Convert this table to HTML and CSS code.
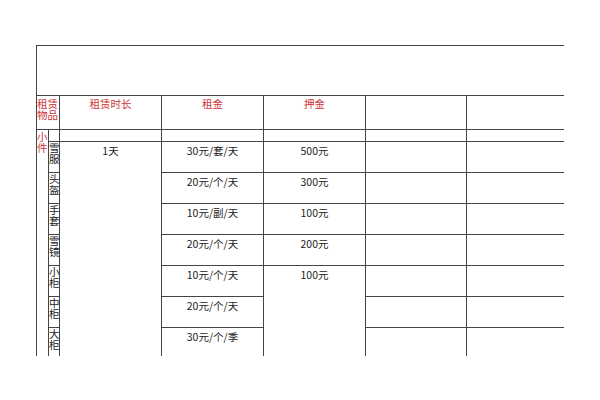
FILE: index.html
```html
<!DOCTYPE html>
<html lang="zh-CN">
<head>
<meta charset="utf-8">
<title>租赁价格表</title>
<link rel="stylesheet" href="styles.css">
</head>
<body>
<div class="sheet">
  <div class="c top"></div>

  <div class="c hd span2 narrow">租赁物品</div>
  <div class="c hd">租赁时长</div>
  <div class="c hd">租金</div>
  <div class="c hd">押金</div>
  <div class="c"></div>
  <div class="c"></div>

  <div class="c cat small">小件</div>
  <div class="c"></div>
  <div class="c"></div>
  <div class="c"></div>
  <div class="c"></div>
  <div class="c"></div>
  <div class="c"></div>

  <div class="c item">雪服</div>
  <div class="c v dur">1天</div>
  <div class="c v">30元/套/天</div>
  <div class="c v">500元</div>
  <div class="c"></div>
  <div class="c"></div>

  <div class="c item">头盔</div>
  <div class="c v">20元/个/天</div>
  <div class="c v">300元</div>
  <div class="c"></div>
  <div class="c"></div>

  <div class="c item">手套</div>
  <div class="c v">10元/副/天</div>
  <div class="c v">100元</div>
  <div class="c"></div>
  <div class="c"></div>

  <div class="c item">雪镜</div>
  <div class="c v">20元/个/天</div>
  <div class="c v">200元</div>
  <div class="c"></div>
  <div class="c"></div>

  <div class="c item">小柜</div>
  <div class="c v">10元/个/天</div>
  <div class="c v dep3">100元</div>
  <div class="c"></div>
  <div class="c"></div>

  <div class="c item">中柜</div>
  <div class="c v">20元/个/天</div>
  <div class="c"></div>
  <div class="c"></div>

  <div class="c item">大柜</div>
  <div class="c v">30元/个/季</div>
  <div class="c"></div>
  <div class="c"></div>
</div>
</body>
</html>
```

FILE: styles.css
```css
html, body {
  margin: 0;
  padding: 0;
  background: #ffffff;
}

body {
  padding: 45px 0 0 36px;
  font-family: "Noto Sans CJK SC", "Noto Sans", sans-serif;
  font-size: 10.5px;
  color: #222222;
}

.sheet {
  display: grid;
  grid-template-columns: 12px 11px 102px 102px 102px 101px 98px;
  grid-template-rows: 50px 34px 12px 31px 31px 31px 31px 31px 31px 29px;
}

.c {
  box-sizing: border-box;
  border-top: 1px solid #444444;
  border-left: 1px solid #444444;
  min-width: 0;
  line-height: 12px;
}

.top {
  grid-column: span 7;
}

.span2 {
  grid-column: span 2;
}

.hd {
  color: #cc3535;
  text-align: center;
  padding-top: 2px;
}

.narrow {
  text-align: left;
  line-height: 11px;
  padding-top: 2px;
  word-break: break-all;
}

.small {
  grid-row: span 8;
}

.cat {
  color: #cc3535;
  line-height: 11px;
  word-break: break-all;
  padding-top: 1px;
}

.dur {
  grid-row: span 7;
}

.dep3 {
  grid-row: span 3;
}

.item {
  line-height: 10.5px;
  word-break: break-all;
  padding-top: 1px;
  overflow: visible;
}

.v {
  text-align: center;
  padding-top: 3px;
}
```
